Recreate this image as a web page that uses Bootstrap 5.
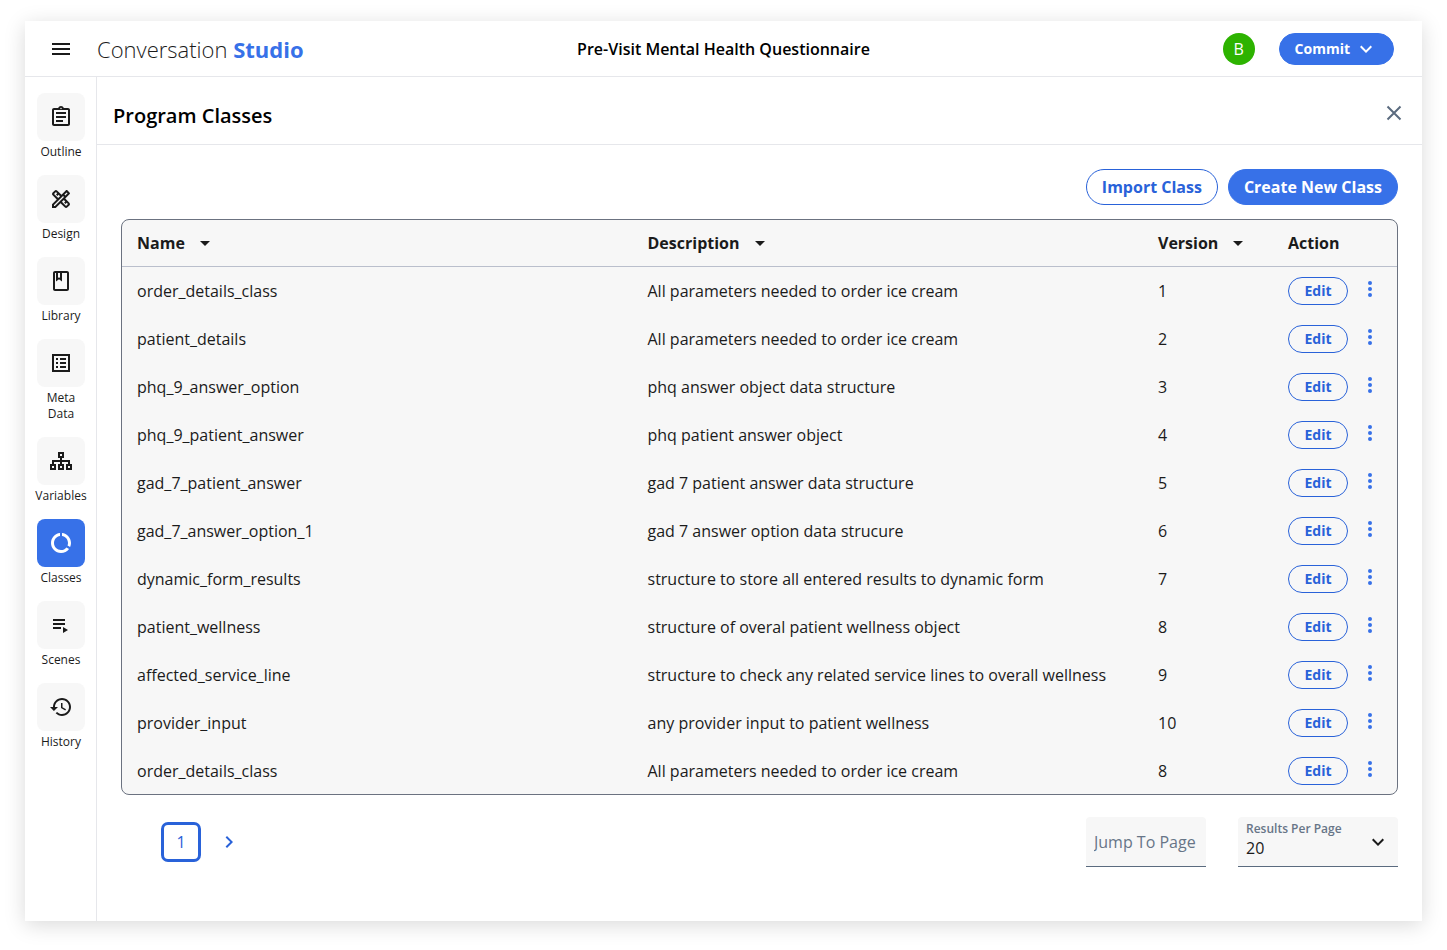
<!DOCTYPE html>
<html lang="en">
<head>
<meta charset="utf-8">
<meta name="viewport" content="width=device-width, initial-scale=1">
<title>Conversation Studio</title>
<link href="https://cdn.jsdelivr.net/npm/bootstrap@5.3.0/dist/css/bootstrap.min.css" rel="stylesheet">
<style>
  body { font-family: "Open Sans", "Noto Sans", sans-serif; font-size: 16px; line-height: 24px; color: #1b1b1b; background: #fff; }
  svg { display: block; fill: currentColor; }
  .app-shell { margin: 21px 25px 29px; min-height: calc(100vh - 50px); background: #fff; box-shadow: 0 4px 20px rgba(0, 0, 0, .15); }
  .line-b { border-bottom: 1px solid #e6e7eb; }
  .topbar { height: 56px; padding: 0 24px; }
  .side { flex: 1 1 0; }
  .brand { font-size: 22px; line-height: 32px; font-weight: 300; color: #1b1b1b; }
  .brand b { font-weight: 700; color: #3771e8; }
  .doc-title { font-size: 16px; font-weight: 600; color: #000; }
  .avatar { width: 32px; height: 32px; background: #2db300; color: #fff; }
  .bare { border: 0; background: none; padding: 0; color: inherit; }
  .pill { border-radius: 18px; font-weight: 700; padding: 0 16px; border: 1px solid #2962d9; color: #2962d9; background: #fff; white-space: nowrap; }
  .pill-fill { background: #3771e8; border-color: #3771e8; color: #fff; }
  .pill-lg { height: 36px; padding: 0 15px; }
  .pill-md { height: 32px; font-size: 14px; padding: 0 15px; }
  .pill-sm { width: 60px; height: 28px; font-size: 14px; padding: 0; background: transparent; line-height: 20px; }
  .actions { gap: 10px; }
  .rail { width: 72px; flex: none; border-right: 1px solid #e6e7eb; padding: 16px 0 0 1px; gap: 15px; }
  .rail a { font-size: 12px; line-height: 16px; color: #1b1b1b; text-decoration: none; text-align: center; gap: 3px; }
  .tile { width: 48px; height: 48px; border-radius: 8px; background: #f7f7f7; }
  .rail .active .tile { background: #3771e8; color: #fff; }
  .page-head { height: 68px; padding: 10px 16px 0; }
  .page-head h1 { font-size: 20px; line-height: 28px; font-weight: 600; color: #000; }
  .page-head .bare { color: #5b6b7f; margin-top: -6px; }
  .page-body { padding: 24px; }
  .grid-box { border: 1px solid #6b7280; border-radius: 8px; background: #f7f7f7; overflow: hidden; margin-top: 14px; }
  .grid-box table { table-layout: fixed; color: #1b1b1b; border-collapse: separate; border-spacing: 0; }
  .grid-box th, .grid-box td { padding: 0 0 0 15px; height: 48px; vertical-align: middle; white-space: nowrap; }
  .grid-box th { height: 47px; font-weight: 700; border-bottom: 1px solid #babfcc; }
  .grid-box tbody tr:last-child td { height: 47px; }
  .col-ver { width: 130px; }
  .col-act { width: 124px; }
  .foot { margin-top: 22px; }
  .foot-fields { gap: 32px; }
  .pager { padding-left: 40px; gap: 16px; color: #2962d9; }
  .pager .current { width: 40px; height: 40px; border: 3px solid #2962d9; border-radius: 7px; }
  .more { color: #3771e8; }
  .field { height: 50px; border: 0; border-bottom: 1px solid #5b6b7f; border-radius: 4px 4px 0 0; background: #f7f7f7; color: #1b1b1b; }
  .field::placeholder { color: #677587; opacity: 1; }
  .jump { width: 120px; padding: 0 0 0 8px; }
  .per-page { width: 160px; }
  .per-page label { position: absolute; left: 8px; top: 4px; font-size: 12px; line-height: 16px; font-weight: 600; color: #677587; }
  .per-page select { width: 100%; appearance: none; padding: 12px 8px 0; }
  .per-page svg { position: absolute; right: 8px; top: 13px; pointer-events: none; }
</style>
</head>
<body>
<div class="app-shell d-flex flex-column">
  <header class="topbar line-b d-flex align-items-center">
    <div class="side d-flex align-items-center">
      <button class="bare" type="button" aria-label="Menu"><svg width="24" height="24" viewBox="0 0 24 24"><path d="M3 18h18v-2H3v2zm0-5h18v-2H3v2zm0-7v2h18V6H3z"/></svg></button>
      <div class="brand ms-4">Conversation <b>Studio</b></div>
    </div>
    <div class="doc-title">Pre-Visit Mental Health Questionnaire</div>
    <div class="side d-flex align-items-center justify-content-end gap-4">
      <div class="avatar rounded-circle d-flex align-items-center justify-content-center">B</div>
      <button class="pill pill-fill pill-md d-flex align-items-center gap-1 me-1" type="button">Commit
        <svg width="24" height="24" viewBox="0 0 24 24"><path d="M7.4 8.6 12 13.2l4.6-4.6L18 10l-6 6-6-6z"/></svg></button>
    </div>
  </header>

  <div class="d-flex flex-grow-1">
    <nav class="rail d-flex flex-column align-items-center" aria-label="Sections">
      <a href="#" class="d-flex flex-column align-items-center"><span class="tile d-flex align-items-center justify-content-center"><svg width="24" height="24" viewBox="0 0 24 24"><path d="M7 15h7v2H7zm0-4h10v2H7zm0-4h10v2H7zm12-4h-4.180C14.400 1.840 13.300 1 12 1c-1.300 0-2.400.84-2.820 2H5c-1.100 0-2 .9-2 2v14c0 1.100.9 2 2 2h14c1.100 0 2-.9 2-2V5c0-1.100-.9-2-2-2zm-7-.25c.41 0 .75.34.75.75s-.34.75-.75.75-.75-.34-.75-.75.34-.75.75-.75zM19 19H5V5h14v14z"/></svg></span>Outline</a>
      <a href="#" class="d-flex flex-column align-items-center"><span class="tile d-flex align-items-center justify-content-center"><svg width="24" height="24" viewBox="0 0 24 24"><path fill-rule="evenodd" d="M16.240 11.510l4.470-4.470c.39-.39.39-1.020 0-1.410l-2.340-2.340c-.39-.39-1.020-.39-1.410 0l-4.470 4.470-4.140-4.130c-.78-.78-2.050-.78-2.830 0l-1.900 1.900c-.78.78-.78 2.050 0 2.830l4.130 4.130L3 17.250V21h3.750l4.760-4.760 4.130 4.130c.78.78 2.050.78 2.830 0l1.900-1.900c.78-.78.78-2.050 0-2.830zM9.180 11.070 5.040 6.940l1.890-1.900L8.200 6.310 7.020 7.500l1.410 1.410 1.190-1.190 1.450 1.450zM5.920 19H5v-.92l9.060-9.060.92.92zM16.400 8.520l-.92-.92 2.190-2.190.92.92zM17.060 18.960l-4.130-4.130 1.900-1.900 1.450 1.450-1.190 1.190 1.410 1.410 1.190-1.190 1.270 1.270z"/></svg></span>Design</a>
      <a href="#" class="d-flex flex-column align-items-center"><span class="tile d-flex align-items-center justify-content-center"><svg width="24" height="24" viewBox="0 0 24 24"><path fill-rule="evenodd" d="M18 2H6c-1.100 0-2 .9-2 2v16c0 1.100.9 2 2 2h12c1.100 0 2-.9 2-2V4c0-1.100-.9-2-2-2zM9 4h2v5l-1-.75L9 9V4zm9 16H6V4h1v8.500l3-2.250 3 2.250V4h5v16z"/></svg></span>Library</a>
      <a href="#" class="d-flex flex-column align-items-center"><span class="tile d-flex align-items-center justify-content-center"><svg width="24" height="24" viewBox="0 0 24 24"><path fill-rule="evenodd" d="M3 3h18v18H3zM5 5v14h14V5zM11 7h6v2h-6zM11 11h6v2h-6zM11 15h6v2h-6zM7 7h2v2H7zM7 11h2v2H7zM7 15h2v2H7z"/></svg></span>Meta<br>Data</a>
      <a href="#" class="d-flex flex-column align-items-center"><span class="tile d-flex align-items-center justify-content-center"><svg width="24" height="24" viewBox="0 0 24 24"><path fill-rule="evenodd" d="M9 3h6v6h-2v2h8v4h2v6h-6v-6h2v-2h-6v2h2v6H9v-6h2v-2H5v2h2v6H1v-6h2v-4h8V9H9zM11 5v2h2V5zM3 17v2h2v-2zM11 17v2h2v-2zM19 17v2h2v-2z"/></svg></span>Variables</a>
      <a href="#" class="active d-flex flex-column align-items-center" aria-current="page"><span class="tile d-flex align-items-center justify-content-center"><svg width="24" height="24" viewBox="0 0 24 24"><path d="M13 2.050v3.030c3.390.49 6 3.390 6 6.920 0 .9-.18 1.750-.48 2.540l2.600 1.530c.56-1.240.88-2.620.88-4.070 0-5.180-3.950-9.450-9-9.950zM12 19c-3.870 0-7-3.130-7-7 0-3.530 2.610-6.430 6-6.920V2.050c-5.060.5-9 4.760-9 9.950 0 5.520 4.470 10 9.990 10 3.310 0 6.240-1.610 8.060-4.090l-2.600-1.530C16.170 17.980 14.210 19 12 19z"/></svg></span>Classes</a>
      <a href="#" class="d-flex flex-column align-items-center"><span class="tile d-flex align-items-center justify-content-center"><svg width="24" height="24" viewBox="0 0 24 24"><path d="M4 6h12v2H4zM4 10h12v2H4zM4 14h8v2H4zM14 14v6l5-3z"/></svg></span>Scenes</a>
      <a href="#" class="d-flex flex-column align-items-center"><span class="tile d-flex align-items-center justify-content-center"><svg width="24" height="24" viewBox="0 0 24 24"><path d="M13 3c-4.970 0-9 4.030-9 9H1l3.890 3.890.07.14L9 12H6c0-3.870 3.130-7 7-7s7 3.130 7 7-3.130 7-7 7c-1.930 0-3.680-.79-4.940-2.060l-1.420 1.420C8.270 19.990 10.510 21 13 21c4.970 0 9-4.030 9-9s-4.030-9-9-9zm-1 5v5l4.280 2.540.72-1.210-3.500-2.080V8H12z"/></svg></span>History</a>
    </nav>

    <main class="flex-grow-1">
      <div class="page-head line-b d-flex align-items-center justify-content-between">
        <h1 class="m-0">Program Classes</h1>
        <button class="bare" type="button" aria-label="Close"><svg width="24" height="24" viewBox="0 0 24 24"><path d="M5.500 5.500l13 13M18.500 5.500l-13 13" stroke="currentColor" stroke-width="2"/></svg></button>
      </div>
      <div class="page-body">
        <div class="actions d-flex justify-content-end">
          <button class="pill pill-lg" type="button">Import Class</button>
          <button class="pill pill-lg pill-fill" type="button">Create New Class</button>
        </div>
        <div class="grid-box">
          <table class="w-100">
            <colgroup><col><col><col class="col-ver"><col class="col-act"></colgroup>
            <thead><tr>
              <th scope="col"><span class="d-flex align-items-center gap-2">Name <svg width="24" height="24" viewBox="0 0 24 24"><path d="M7 10l5 5 5-5z"/></svg></span></th>
              <th scope="col"><span class="d-flex align-items-center gap-2">Description <svg width="24" height="24" viewBox="0 0 24 24"><path d="M7 10l5 5 5-5z"/></svg></span></th>
              <th scope="col"><span class="d-flex align-items-center gap-2">Version <svg width="24" height="24" viewBox="0 0 24 24"><path d="M7 10l5 5 5-5z"/></svg></span></th>
              <th scope="col">Action</th>
            </tr></thead>
            <tbody id="rows"></tbody>
          </table>
        </div>
        <div class="foot d-flex align-items-center justify-content-between">
          <div class="pager d-flex align-items-center">
            <button class="bare current" type="button" aria-current="page">1</button>
            <button class="bare" type="button" aria-label="Next page"><svg width="24" height="24" viewBox="0 0 24 24"><path d="M8.600 7.400 10 6l6 6-6 6-1.400-1.400 4.600-4.600z"/></svg></button>
          </div>
          <div class="foot-fields d-flex">
            <input class="field jump" type="text" placeholder="Jump To Page" aria-label="Jump To Page">
            <div class="per-page position-relative">
              <label for="perPage">Results Per Page</label>
              <select class="field" id="perPage"><option>20</option><option>50</option></select>
              <svg width="24" height="24" viewBox="0 0 24 24"><path d="M7.400 8.600 12 13.200l4.600-4.600L18 10l-6 6-6-6z"/></svg>
            </div>
          </div>
        </div>
      </div>
    </main>
  </div>
</div>
<script src="https://cdn.jsdelivr.net/npm/bootstrap@5.3.0/dist/js/bootstrap.bundle.min.js"></script>
<script>
  const rows = [
    ["order_details_class", "All parameters needed to order ice cream", 1],
    ["patient_details", "All parameters needed to order ice cream", 2],
    ["phq_9_answer_option", "phq answer object data structure", 3],
    ["phq_9_patient_answer", "phq patient answer object", 4],
    ["gad_7_patient_answer", "gad 7 patient answer data structure", 5],
    ["gad_7_answer_option_1", "gad 7 answer option data strucure", 6],
    ["dynamic_form_results", "structure to store all entered results to dynamic form", 7],
    ["patient_wellness", "structure of overal patient wellness object", 8],
    ["affected_service_line", "structure to check any related service lines to overall wellness", 9],
    ["provider_input", "any provider input to patient wellness", 10],
    ["order_details_class", "All parameters needed to order ice cream", 8]
  ];
  document.getElementById("rows").innerHTML = rows.map(([name, text, version]) => `
    <tr><td>${name}</td><td>${text}</td><td>${version}</td>
    <td><div class="d-flex align-items-center gap-2">
      <button class="pill pill-sm" type="button">Edit</button>
      <button class="bare more" type="button" aria-label="More actions"><svg width="28" height="28" viewBox="0 0 28 28"><circle cx="14" cy="6" r="2"/><circle cx="14" cy="12" r="2"/><circle cx="14" cy="18" r="2"/></svg></button>
    </div></td></tr>`).join("");
</script>
</body>
</html>
